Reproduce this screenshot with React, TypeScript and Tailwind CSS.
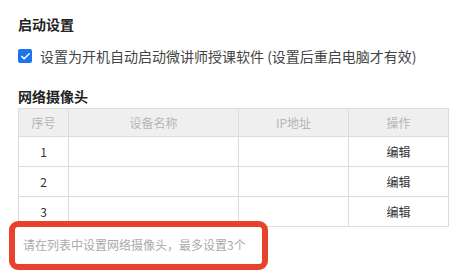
import { Check } from 'lucide-react';

const rows = [1, 2, 3];

export default function App() {
  return (
    <div className="relative w-[475px] h-[278px] bg-white font-['Microsoft_YaHei','Noto_Sans_CJK_SC',sans-serif] text-[#333]">
      <div className="px-[18px] pt-[14px]">
        <h3 className="text-[14px] leading-[20px] font-bold text-[#222]">启动设置</h3>

        <label className="mt-[12px] flex h-[20px] items-center gap-[8px]">
          <span className="flex h-[14px] w-[14px] items-center justify-center rounded-[2px] bg-[#1d74f0]">
            <Check className="h-[11px] w-[11px] text-white" strokeWidth={3.5} />
          </span>
          <span className="text-[14px] leading-[20px] text-[#444]">
            设置为开机自动启动微讲师授课软件 (设置后重启电脑才有效)
          </span>
        </label>

        <h3 className="mt-[20px] text-[14px] leading-[20px] font-bold text-[#222]">网络摄像头</h3>

        <div className="mt-[2px] w-[431px] border-l border-t border-[#dcdcdc] text-[12px]">
          <div className="grid grid-cols-[50px_170px_110px_100px] bg-[#efefef] text-[#b5b5b5]">
            <div className="flex h-[28px] items-center justify-center border-b border-r border-[#dcdcdc]">序号</div>
            <div className="flex h-[28px] items-center justify-center border-b border-r border-[#dcdcdc]">设备名称</div>
            <div className="flex h-[28px] items-center justify-center border-b border-r border-[#dcdcdc]">IP地址</div>
            <div className="flex h-[28px] items-center justify-center border-b border-r border-[#dcdcdc]">操作</div>
          </div>
          {rows.map(n => (
            <div key={n} className="grid grid-cols-[50px_170px_110px_100px] text-[#333]">
              <div className="flex h-[30px] items-center justify-center border-b border-r border-[#dcdcdc]">{n}</div>
              <div className="h-[30px] border-b border-r border-[#dcdcdc]" />
              <div className="h-[30px] border-b border-r border-[#dcdcdc]" />
              <div className="flex h-[30px] items-center justify-center border-b border-r border-[#dcdcdc]">编辑</div>
            </div>
          ))}
        </div>

        <p className="mt-[9px] pl-[5px] text-[12px] leading-[18px] text-[#aaa]">请在列表中设置网络摄像头，最多设置3个</p>
      </div>

      {/* annotation frame */}
      <div className="absolute left-[9px] top-[221px] h-[49px] w-[259px] rounded-[9px] border-[6px] border-[#e8412c]" />
    </div>
  );
}
